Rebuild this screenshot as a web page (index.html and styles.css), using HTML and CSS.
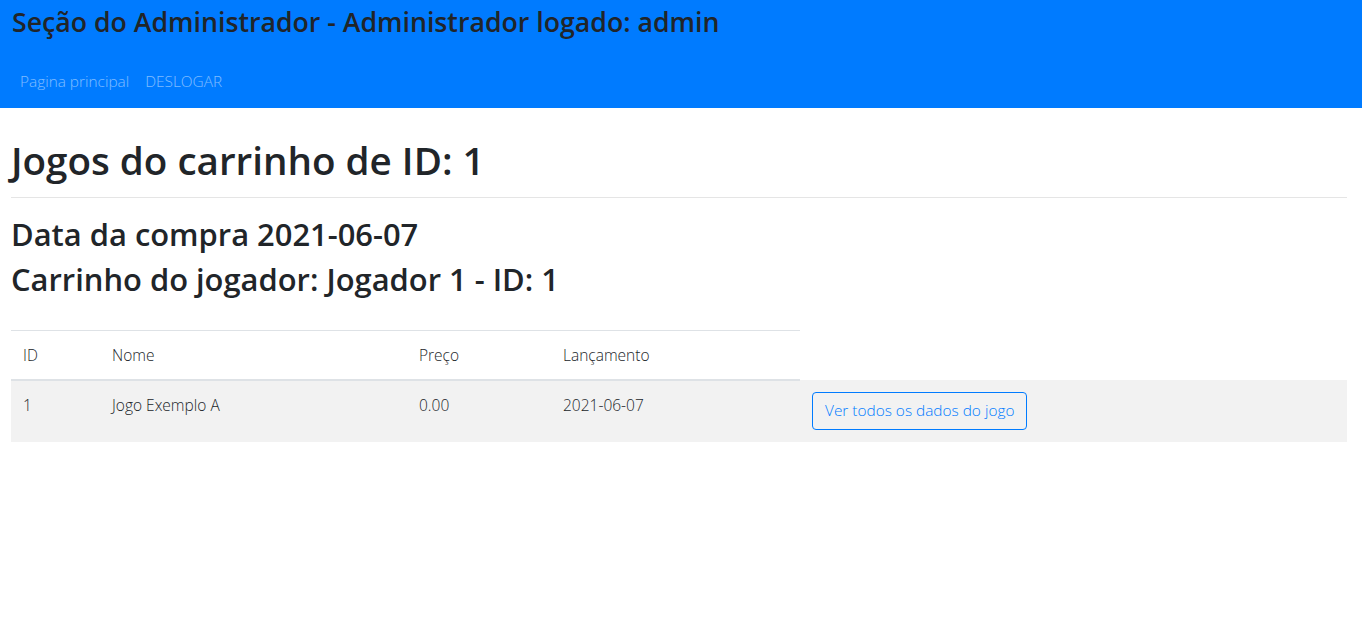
FILE: index.html
```html
<!DOCTYPE html>
<html lang="pt-BR">
<head>
<meta charset="utf-8">
<title>Seção do Administrador</title>
<link rel="stylesheet" href="styles.css">
</head>
<body>
<header class="topbar">
  <h2 class="brand">Seção do Administrador - Administrador logado: admin</h2>
  <nav class="nav">
    <a class="nav-link" href="#">Pagina principal</a>
    <a class="nav-link" href="#">DESLOGAR</a>
  </nav>
</header>
<main class="content">
  <h1 class="page-title">Jogos do carrinho de ID: 1</h1>
  <hr class="divider">
  <h2 class="sub">Data da compra 2021-06-07</h2>
  <h2 class="sub">Carrinho do jogador: Jogador 1 - ID: 1</h2>
  <table class="games">
    <colgroup>
      <col class="c-id"><col class="c-name"><col class="c-price"><col class="c-date"><col class="c-act">
    </colgroup>
    <thead>
      <tr><th>ID</th><th>Nome</th><th>Preço</th><th>Lançamento</th></tr>
    </thead>
    <tbody>
      <tr class="striped">
        <td>1</td><td>Jogo Exemplo A</td><td>0.00</td><td>2021-06-07</td>
        <td><button class="btn-outline" type="button">Ver todos os dados do jogo</button></td>
      </tr>
    </tbody>
  </table>
</main>
</body>
</html>
```
FILE: styles.css
```css
html, body {
  margin: 0;
  padding: 0;
  background: #ffffff;
}
body {
  font-family: "Open Sans", "Noto Sans", "Liberation Sans", sans-serif;
  color: #212529;
  font-size: 16px;
  line-height: 24px;
}
.topbar {
  width: calc(100% - 4px);
  height: 108px;
  box-sizing: border-box;
  background: #007bff;
  padding: 5px 12px 0 12px;
}
.brand {
  margin: 0;
  font-size: 26.7px;
  line-height: 34px;
  font-weight: 600;
  color: #212529;
}
.nav {
  display: flex;
  margin-top: 23px;
}
.nav-link {
  display: block;
  padding: 8px 8px;
  color: rgba(255, 255, 255, 0.5);
  text-decoration: none;
  font-weight: 300;
  font-size: 15.4px;
  line-height: 24px;
}
.content {
  padding: 0 19px 0 11px;
}
.page-title {
  margin: 29px 0 0 0;
  font-size: 38.6px;
  line-height: 46px;
  font-weight: 600;
}
.divider {
  margin: 14px 0 0 0;
  border: 0;
  border-top: 1px solid rgba(0, 0, 0, 0.1);
  height: 0;
}
.sub {
  margin: 0;
  font-size: 30.9px;
  line-height: 38px;
  font-weight: 600;
}
.divider + .sub {
  margin-top: 17px;
}
.sub + .sub {
  margin-top: 7px;
}
.games {
  margin-top: 32px;
  width: 100%;
  border-collapse: collapse;
  table-layout: fixed;
  font-weight: 300;
  font-size: 15.5px;
}
.c-id { width: 89px; }
.c-name { width: 307px; }
.c-price { width: 144px; }
.c-date { width: 249px; }
.games th {
  text-align: left;
  font-weight: 300;
  padding: 12px;
  border-top: 1px solid #dee2e6;
  border-bottom: 2px solid #dee2e6;
  vertical-align: top;
}
.games td {
  padding: 12px 12px 12px 12px;
  vertical-align: top;
}
.striped {
  background: #f2f2f2;
}
.btn-outline {
  display: inline-block;
  height: 38px;
  box-sizing: border-box;
  padding: 0 12px;
  border: 1px solid #007bff;
  border-radius: 4px;
  background: transparent;
  color: #007bff;
  font-family: inherit;
  font-size: 15.4px;
  font-weight: 300;
  line-height: 36px;
  cursor: pointer;
}
```
